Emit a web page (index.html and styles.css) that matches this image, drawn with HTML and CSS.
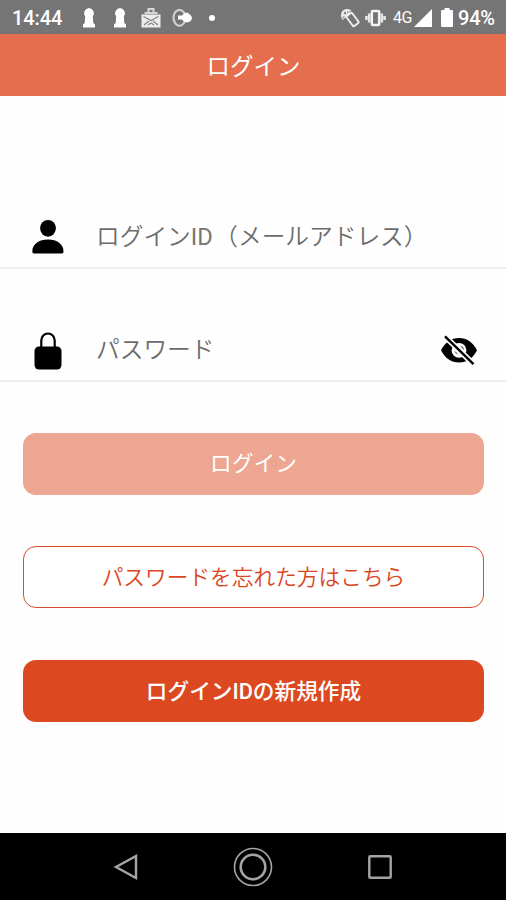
FILE: index.html
```html
<!DOCTYPE html>
<html lang="ja">
<head>
<meta charset="utf-8">
<title>ログイン</title>
<link rel="stylesheet" href="styles.css">
</head>
<body>
<div class="status">
  <span class="clock">14:44</span>
  <svg class="key" width="14" height="20" viewBox="0 0 14 20"><path d="M7 0a5.300 5.300 0 0 1 3.800 8.600L11.300 15l1.700 1.500v3.100H1v-3.100L2.700 15l.5-6.400A5.300 5.300 0 0 1 7 0z" fill="#fff"/></svg>
  <svg class="key second" width="14" height="20" viewBox="0 0 14 20"><path d="M7 0a5.300 5.300 0 0 1 3.800 8.600L11.300 15l1.700 1.500v3.100H1v-3.100L2.700 15l.5-6.400A5.300 5.300 0 0 1 7 0z" fill="#fff"/></svg>
  <svg class="mail" width="20" height="20" viewBox="0 0 20 20"><path d="M3.500 5h13M7.500 4.500V1h5v3.500" fill="none" stroke="#d6d6d6" stroke-width="2"/><path d="M.5 6.500h19v13H.5z" fill="#ececec"/><path d="M2.500 8.500l7.500 4 7.500-4M3 17l5-4M17 17l-5-4M7 17l3-2 3 2" fill="none" stroke="#858585" stroke-width="1.200"/></svg>
  <svg class="share" width="20" height="20" viewBox="0 0 20 20"><ellipse cx="7.500" cy="9.800" rx="6" ry="8" fill="none" stroke="#d0d0d0" stroke-width="2.200"/><path d="M6 7.500h4l2-2 3-1 3 2q2 2 2 3.500t-2 3.500l-3 1-3-1-2-2H6z" fill="#fff"/></svg>
  <span class="dot"></span>
  <span class="spacer"></span>
  <svg class="rotate" width="20" height="20" viewBox="0 0 20 20"><g fill="none" stroke="#eee"><rect x="9" y="5.200" width="7" height="12.500" rx="1" stroke-width="1.900" transform="rotate(-37 12.7 11.4)"/><path d="M3.500 11.500A5 5 0 1 1 11 3M4 8.500A3 3 0 0 1 9 3.500M2.500 6l5 2M6 2l1 5M4 10l6-6" stroke-width="1.400"/></g></svg>
  <svg class="vibrate" width="21" height="18" viewBox="0 0 21 18"><rect x="6.800" y="2" width="7.400" height="14" rx="1" fill="none" stroke="#f4f4f4" stroke-width="2.500"/><path d="M4.200 4.500v9M16.800 4.500v9M1.400 7v4M19.600 7v4" stroke="#e4e4e4" stroke-width="2.600"/></svg>
  <span class="net">4G</span>
  <svg class="signal" width="18" height="18" viewBox="0 0 18 18"><path d="M18 0v18H0z" fill="#fff"/></svg>
  <svg class="battery" width="12" height="19" viewBox="0 0 12 19"><path d="M3.500 0h5v2H11q1 0 1 1v15q0 1-1 1H1q-1 0-1-1V3q0-1 1-1h2.500z" fill="#fff"/></svg>
  <span class="percent">94%</span>
</div>
<header class="header">ログイン</header>
<main class="form">
  <div class="field">
    <svg class="icon" width="32" height="36" viewBox="0 0 32 36"><ellipse cx="16" cy="9.300" rx="7.900" ry="8.400"/><path d="M.3 32.500C.3 25 7 20.500 16 20.500s15.500 4.500 15.500 12q0 2-1.500 2H2q-1.700 0-1.700-2z"/></svg>
    <span class="hint">ログイン<span class="latin">ID</span>（メールアドレス）</span>
  </div>
  <div class="field">
    <svg class="icon lock" width="32" height="38" viewBox="0 0 32 38"><rect x="2.500" y="14.500" width="27" height="23" rx="4.500"/><path d="M9.300 16V8.500a6.700 7 0 0 1 13.400 0V16" fill="none" stroke="#000" stroke-width="2.200"/></svg>
    <span class="hint">パスワード</span>
    <svg class="eye" width="38" height="30" viewBox="0 0 38 30"><path d="M1 15.300C5 7.300 11 3 19 3s14 4.300 18 12.300c-4 8-10 12.200-18 12.200S5 23.300 1 15.300z"/><circle cx="19" cy="15.300" r="7.400" fill="#fff"/><path d="M20 10.500q4 .8 4.300 4.500l-2-1zM14 16q1 3 4.500 3.500l-2-2.500z" fill="#888"/><path d="M1.500-2 36 31.600" stroke="#fff" stroke-width="5.800"/><path d="M5 1.400 33.500 29.200" stroke="#000" stroke-width="2.400"/></svg>
  </div>
  <div class="actions">
    <div class="button disabled">ログイン</div>
    <div class="button outline">パスワードを忘れた方はこちら</div>
    <div class="button primary">ログインIDの新規作成</div>
  </div>
</main>
<nav class="nav">
  <svg width="24" height="26" viewBox="0 0 24 26"><path d="M22 2v22L2 13z"/></svg>
  <svg width="40" height="40" viewBox="0 0 40 40"><circle cx="20" cy="20" r="18.500" stroke-width="1.600"/><circle cx="20" cy="20" r="12.300" stroke-width="2.600"/></svg>
  <svg width="24" height="24" viewBox="0 0 24 24"><rect x="1.300" y="1.300" width="21.400" height="21.400" rx="1"/></svg>
</nav>
</body>
</html>
```
FILE: styles.css
```css
* { box-sizing: border-box; }
body {
  margin: 0;
  height: 900px;
  display: flex;
  flex-direction: column;
  background: #fefefe;
  font-family: Roboto, "Noto Sans CJK JP", sans-serif;
  overflow: hidden;
}
svg { display: block; flex: none; overflow: visible; }
.status {
  height: 34px;
  flex: none;
  display: flex;
  align-items: center;
  padding: 1px 11px 0 12px;
  background: #757575;
  color: #fff;
  font-size: 20px;
  font-weight: 500;
  white-space: nowrap;
}
.clock { width: 70px; letter-spacing: -0.1px; }
.second { margin-left: 17px; }
.mail { margin-left: 14px; }
.share { margin-left: 11px; }
.dot { width: 6px; height: 6px; margin-left: 17px; border-radius: 50%; background: #fff; }
.spacer { flex: 1; }
.vibrate { margin-left: 5px; }
.net { width: 20px; margin-left: 7px; font-size: 16px; font-weight: 400; letter-spacing: -0.6px; }
.signal { margin-left: 1px; }
.battery { margin-left: 9px; }
.percent { width: 37px; margin-left: 5px; letter-spacing: -0.2px; }
.header {
  height: 62px;
  flex: none;
  display: flex;
  align-items: center;
  justify-content: center;
  padding-left: 1px;
  background: #e46e4e;
  color: #fff;
  font-size: 23.5px;
}
.form { flex: 1; padding-top: 60px; }
.field {
  height: 113px;
  display: flex;
  align-items: center;
  padding: 50px 28px 0 32px;
  border-bottom: 2px solid #eeeeee;
}
.hint {
  flex: 1;
  margin-left: 32px;
  padding-bottom: 3px;
  color: #6c6c6c;
  font-size: 23.7px;
  font-weight: 350;
  white-space: nowrap;
}
.latin { margin-right: 1.5px; font-weight: 400; color: #757575; }
.lock { margin-top: 2px; }
.eye { margin-top: 1px; }
.actions { display: grid; gap: 51px; padding: 51px 22px 0 23px; }
.button {
  height: 62px;
  display: flex;
  align-items: center;
  justify-content: center;
  padding-bottom: 5px;
  border-radius: 13px;
  font-size: 21.7px;
  color: #fff;
}
.outline {
  padding-bottom: 3px;
  background: #fff;
  border: 1px solid #dc4b2b;
  color: #dc4622;
  font-weight: 350;
}
.disabled { background: #eda691; }
.primary { margin-top: 1px; padding-bottom: 3px; background: #dc4920; font-weight: 500; }
.nav {
  height: 67px;
  flex: none;
  display: flex;
  align-items: center;
  justify-content: space-between;
  padding: 0 114px;
  background: #000;
}
.nav svg { fill: none; stroke: #a4a4a4; stroke-width: 2.4; }
```
